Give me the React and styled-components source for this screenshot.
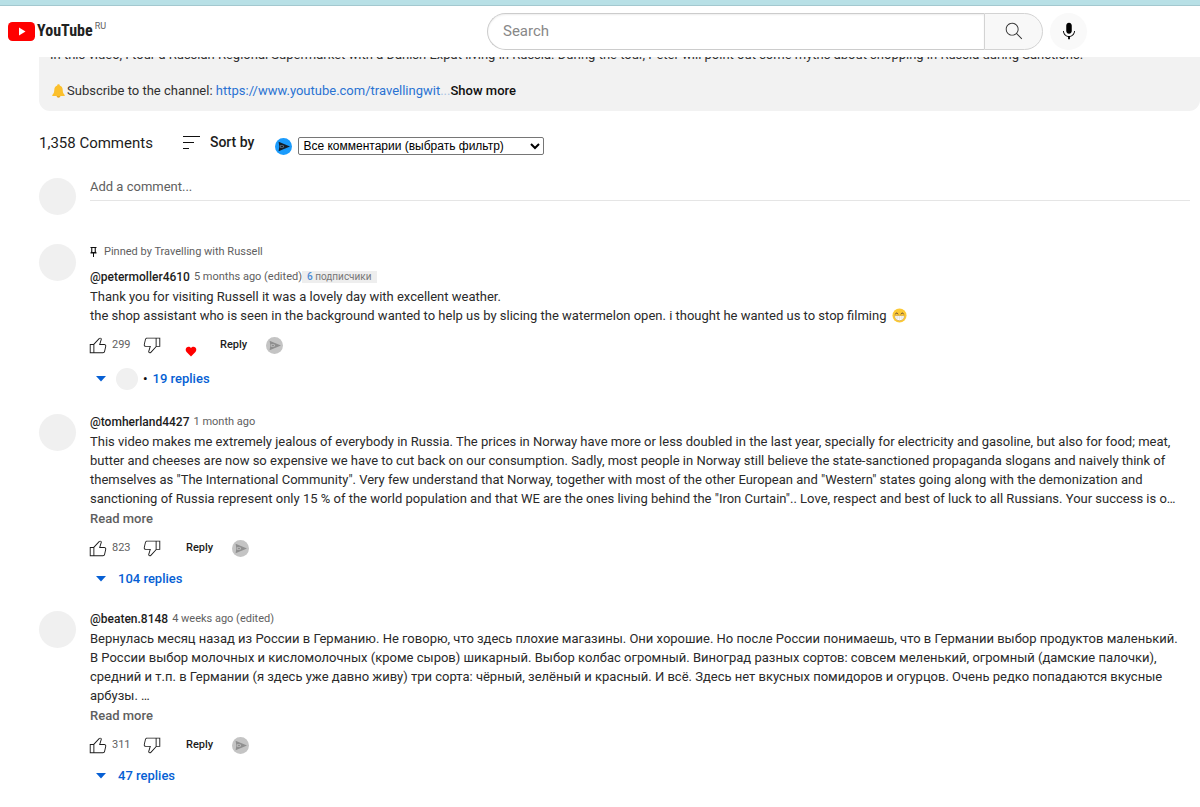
import React, { useState } from "react";
import styled, { createGlobalStyle } from "styled-components";

const comments = [
  {
    id: 1,
    pinnedBy: "Travelling with Russell",
    author: "@petermoller4610",
    time: "5 months ago (edited)",
    subscribers: 6,
    lines: [
      "Thank you for visiting Russell it was a lovely day with excellent weather.",
      "the shop assistant who is seen in the background wanted to help us by slicing the watermelon open. i thought he wanted us to stop filming ",
    ],
    emoji: true,
    likes: 299,
    hearted: true,
    replies: 19,
    creatorReplied: true,
  },
  {
    id: 2,
    author: "@tomherland4427",
    time: "1 month ago",
    lines: [
      'This video makes me extremely jealous of everybody in Russia. The prices in Norway have more or less doubled in the last year, specially for electricity and gasoline, but also for food; meat, butter and cheeses are now so expensive we have to cut back on our consumption. Sadly, most people in Norway still believe the state-sanctioned propaganda slogans and naively think of themselves as "The International Community". Very few understand that Norway, together with most of the other European and "Western" states going along with the demonization and sanctioning of Russia represent only 15 % of the world population and that WE are the ones living behind the "Iron Curtain".. Love, respect and best of luck to all Russians. Your success is o…',
    ],
    more: true,
    likes: 823,
    replies: 104,
  },
  {
    id: 3,
    author: "@beaten.8148",
    time: "4 weeks ago (edited)",
    lines: [
      "Вернулась месяц назад из России в Германию. Не говорю, что здесь плохие магазины. Они хорошие. Но после России понимаешь, что в Германии выбор продуктов маленький. В России выбор молочных и кисломолочных (кроме сыров) шикарный. Выбор колбас огромный. Виноград разных сортов: совсем меленький, огромный (дамские палочки), средний и т.п. в Германии (я здесь уже давно живу) три сорта: чёрный, зелёный и красный. И всё. Здесь нет вкусных помидоров и огурцов. Очень редко попадаются вкусные арбузы. …",
    ],
    more: true,
    likes: 311,
    replies: 47,
  },
];

const LikeIcon = () => (
  <svg width="22" height="22" viewBox="0 0 24 24" fill="currentColor" aria-hidden="true">
    <path d="M18.77,11h-4.23l1.52-4.94C16.38,5.03,15.54,4,14.38,4c-0.58,0-1.14,0.24-1.52,0.65L7,11H3v10h4h1h9.43 c1.06,0,1.98-0.67,2.19-1.61l1.34-6C21.23,12.15,20.18,11,18.77,11z M7,20H4v-8h3V20z M19.98,13.17l-1.34,6 C18.54,19.65,18.03,20,17.43,20H8v-8.61l5.6-6.06C13.79,5.12,14.08,5,14.38,5c0.26,0,0.5,0.11,0.63,0.3 c0.07,0.1,0.15,0.26,0.09,0.47l-1.52,4.94L13.18,12h1.35h4.23c0.41,0,0.8,0.17,1.03,0.46C19.92,12.61,20.05,12.86,19.98,13.17z" />
  </svg>
);

const DislikeIcon = () => (
  <svg width="22" height="22" viewBox="0 0 24 24" fill="currentColor" aria-hidden="true">
    <path d="M17,4h-1H6.57C5.5,4,4.59,4.67,4.38,5.61l-1.34,6C2.77,12.85,3.82,14,5.23,14h4.23l-1.52,4.94C7.62,19.97,8.46,21,9.62,21 c0.58,0,1.14-0.24,1.52-0.65L17,14h4V4H17z M10.4,19.67C10.21,19.88,9.92,20,9.62,20c-0.26,0-0.5-0.11-0.63-0.3 c-0.07-0.1-0.15-0.26-0.09-0.47l1.52-4.94l0.4-1.29H9.46H5.23c-0.41,0-0.8-0.17-1.03-0.46c-0.12-0.15-0.25-0.4-0.18-0.72l1.34-6 C5.46,5.35,5.97,5,6.57,5H16v8.61L10.4,19.67z M20,13h-3V5h3V13z" />
  </svg>
);

const HeartIcon = () => (
  <svg width="12" height="12" viewBox="0 0 12 12" aria-hidden="true">
    <path fill="#f00" d="M6 11.4 1.8 7.2C.3 5.6.4 3.5 1.6 2.4 2.9 1.2 4.9 1.4 6 3c1.1-1.6 3.1-1.8 4.4-.6 1.2 1.1 1.3 3.2-.2 4.8z" />
  </svg>
);

const PinIcon = () => (
  <svg width="7" height="10" viewBox="0 0 7 10" aria-hidden="true">
    <path
      fill="#0f0f0f"
      fillRule="evenodd"
      d="M.5 0h6v1h-.7v3.5L6.500 5.500v1H4V10H3V6.500H.500v-1l.7-1V1H.5zM2.300 1v4h2.400V1z"
    />
  </svg>
);

const BellIcon = () => (
  <svg width="13" height="14" viewBox="0 0 13 14" aria-hidden="true">
    <path fill="#fbc02d" d="M6.5.3c.8 0 1.3.5 1.3 1.2 1.9.6 2.8 2.2 2.9 4.3.1 2.4.4 3.7 2 5.2v1H.3v-1c1.600-1.500 1.900-2.800 2-5.200.1-2.100 1-3.700 2.900-4.300C5.200.8 5.700.3 6.500.3z" />
    <path fill="#e9a825" d="M4.6 12h3.8c-.1 1-.9 1.7-1.9 1.7S4.7 13 4.6 12z" />
  </svg>
);

const GrinIcon = () => (
  <svg width="15" height="15" viewBox="0 0 16 16" role="img" aria-label="grinning face">
    <circle cx="8" cy="8" r="7.5" fill="#fcc934" />
    <path d="M3.6 6.4c.5-1.5 2.3-1.5 2.8 0M9.6 6.4c.5-1.5 2.3-1.5 2.8 0" fill="none" stroke="#5d4037" strokeWidth="1" strokeLinecap="round" />
    <path d="M2.8 8.2h10.4c.2 3-2 5.3-5.2 5.3S2.6 11.2 2.8 8.2z" fill="#fff" stroke="#b98a2a" strokeWidth=".5" />
    <path d="M3.2 10.6h9.6M5.5 8.4v4.4M8 8.4v5M10.5 8.4v4.4" stroke="#c9c9c9" strokeWidth=".4" />
  </svg>
);

const BadgeIcon = ({ active }) => (
  <svg width="17" height="17" viewBox="0 0 17 17" aria-hidden="true">
    <circle cx="8.5" cy="8.5" r="8.5" fill={active ? "#1a9bfc" : "#c4c4c4"} />
    <path d="M3.6 3.8 15 8.5 3.6 13.2l.8-4.7z" fill={active ? "#15202b" : "#8f8f8f"} />
    <path d="M5 7.2h3.4l.8 1.3-.8 1.300H5z" fill={active ? "#5d7183" : "#bcbcbc"} />
    <path d="M5.8 8.5h2.200" stroke={active ? "#15202b" : "#8f8f8f"} strokeWidth="1" />
  </svg>
);

const Comment = ({ comment }) => {
  const [open, setOpen] = useState(false);

  return (
    <CommentRow>
      <Avatar />
      <CommentMain>
        {comment.pinnedBy && (
          <Pinned>
            <PinIcon />
            Pinned by {comment.pinnedBy}
          </Pinned>
        )}
        <Meta>
          <Author href="#">{comment.author}</Author>
          <Time href="#">{comment.time}</Time>
          {comment.subscribers && (
            <Subscribers>
              <b>{comment.subscribers}</b> подписчики
            </Subscribers>
          )}
        </Meta>
        <CommentText>
          {comment.lines.map((line, index) => (
            <p key={index}>
              {line}
              {comment.emoji && index === comment.lines.length - 1 && <GrinIcon />}
            </p>
          ))}
        </CommentText>
        {comment.more && <ReadMore>Read more</ReadMore>}
        <Actions>
          <IconButton aria-label="Like">
            <LikeIcon />
          </IconButton>
          <Likes>{comment.likes}</Likes>
          <IconButton aria-label="Dislike">
            <DislikeIcon />
          </IconButton>
          {comment.hearted && (
            <Heart>
              <HeartIcon />
            </Heart>
          )}
          <ReplyButton>Reply</ReplyButton>
          <IconButton aria-label="Comment history">
            <BadgeIcon />
          </IconButton>
        </Actions>
        <Replies onClick={() => setOpen(!open)} aria-expanded={open}>
          <svg width="10" height="6" viewBox="0 0 10 6" aria-hidden="true">
            <path d="M0 0h10L5 5.5z" fill="#065fd4" />
          </svg>
          {comment.creatorReplied && (
            <Creator>
              <Avatar $small />
              <span>•</span>
            </Creator>
          )}
          {comment.replies} replies
        </Replies>
      </CommentMain>
    </CommentRow>
  );
};

const App = () => {
  return (
    <>
      <GlobalStyle />
      <Header>
        <Logo href="#" aria-label="YouTube home">
          <svg width="27" height="19" viewBox="0 0 27 19" aria-hidden="true">
            <rect width="27" height="19" rx="4.5" fill="#f00" />
            <path d="M11 5.5v8l6.5-4z" fill="#fff" />
          </svg>
          <Wordmark>YouTube</Wordmark>
          <Country>RU</Country>
        </Logo>
        <SearchForm onSubmit={(e) => e.preventDefault()}>
          <SearchInput type="text" placeholder="Search" aria-label="Search" />
          <SearchButton aria-label="Search">
            <svg width="22" height="22" viewBox="0 0 24 24" fill="#303030" aria-hidden="true">
              <path d="M20.87 20.17l-5.59-5.59C16.35 13.35 17 11.75 17 10c0-3.87-3.13-7-7-7s-7 3.13-7 7 3.13 7 7 7c1.75 0 3.35-.65 4.58-1.71l5.59 5.59.7-.71zM10 16c-3.31 0-6-2.69-6-6s2.69-6 6-6 6 2.69 6 6-2.69 6-6 6z" />
            </svg>
          </SearchButton>
          <MicButton type="button" aria-label="Search with your voice">
            <svg width="22" height="22" viewBox="0 0 24 24" aria-hidden="true">
              <path d="M12 3C10.34 3 9 4.37 9 6.07v5.86C9 13.63 10.34 15 12 15s3-1.37 3-3.07V6.07C15 4.37 13.66 3 12 3zM18.5 12h-1c0 3.03-2.47 5.5-5.5 5.5S6.5 15.03 6.5 12h-1c0 3.24 2.39 5.93 5.5 6.41V21h2v-2.59c3.11-.48 5.5-3.17 5.5-6.41z" />
            </svg>
          </MicButton>
        </SearchForm>
      </Header>

      <Description>
        <DescriptionText>
          <p>
            In this video, I tour a Russian Regional Supermarket with a Danish Expat living in Russia. During the tour, Peter will point out some myths about shopping in Russia during Sanctions.
          </p>
          <p>&nbsp;</p>
          <DescriptionLine>
            <BellIcon />
            <span>Subscribe to the channel:&nbsp;</span>
            <a href="#">https://www.youtube.com/travellingwit</a>
            <Dots>...</Dots>
            <ShowMore>Show more</ShowMore>
          </DescriptionLine>
        </DescriptionText>
      </Description>

      <Comments>
        <CommentsHeader>
          <Count>1,358 Comments</Count>
          <SortButton>
            <svg width="17" height="13" viewBox="0 0 17 13" aria-hidden="true">
              <path d="M0 .5h17M0 6.5h11M0 12.5h6" stroke="#0f0f0f" />
            </svg>
            Sort by
          </SortButton>
          <Filter>
            <BadgeIcon active />
            <select aria-label="Фильтр комментариев">
              <option>Все комментарии (выбрать фильтр)</option>
            </select>
          </Filter>
        </CommentsHeader>
        <AddComment>
          <Avatar />
          <CommentInput type="text" placeholder="Add a comment..." aria-label="Add a comment" />
        </AddComment>
        {comments.map((comment) => (
          <Comment key={comment.id} comment={comment} />
        ))}
      </Comments>
    </>
  );
};

const GlobalStyle = createGlobalStyle`
  * {
    box-sizing: border-box;
  }

  body {
    margin: 0;
    background: #fff;
    color: #1c1c1c;
    font-family: Roboto, "Liberation Sans", Arial, sans-serif;
    font-size: 13px;
    line-height: 18px;
  }

  p, h2 {
    margin: 0;
  }

  button {
    border: none;
    padding: 0;
    background: none;
    color: inherit;
    font: inherit;
    cursor: pointer;
  }

  a {
    color: inherit;
    text-decoration: none;
  }

  svg {
    flex-shrink: 0;
  }
`;

const Header = styled.header`
  display: flex;
  align-items: center;
  height: 57px;
  padding: 0 8px;
  border-top: 5px solid #b8e0e6;
  box-shadow: inset 0 1px 0 #a3c8cf;
`;

const Logo = styled.a`
  display: flex;
  align-items: center;
  flex: 0 1 479px;
  gap: 2px;
`;

const Wordmark = styled.span`
  font-family: "Roboto Condensed", "Liberation Sans Narrow", "Liberation Sans", sans-serif;
  font-size: 16px;
  font-weight: 700;
  color: #212121;
`;

const Country = styled.span`
  align-self: flex-start;
  font-size: 9px;
  line-height: 9px;
  color: #606060;
`;

const SearchForm = styled.form`
  display: flex;
  flex: 0 1 600px;
  height: 37px;
`;

const SearchInput = styled.input`
  flex: 1;
  min-width: 0;
  padding: 0 15px;
  border: 1px solid #ccc;
  border-right: none;
  border-radius: 19px 0 0 19px;
  box-shadow: inset 0 1px 2px #eee;
  font: inherit;
  font-size: 15px;
  outline: none;

  &::placeholder {
    color: #888;
  }
`;

const SearchButton = styled.button`
  display: flex;
  align-items: center;
  justify-content: center;
  width: 59px;
  && {
    border: 1px solid #d3d3d3;
    border-radius: 0 19px 19px 0;
    background: #f8f8f8;
  }
`;

const MicButton = styled.button`
  display: flex;
  align-items: center;
  justify-content: center;
  width: 37px;
  margin-left: 7px;
  && {
    border-radius: 50%;
    background: #f9f9f9;
  }
`;

const Description = styled.section`
  margin-left: 39px;
  padding: 0 11px 11px;
  overflow: hidden;
  border-radius: 0 0 11px 11px;
  background: #f2f2f2;
  color: #303030;
`;

const DescriptionText = styled.div`
  margin-top: -11px;
`;

const DescriptionLine = styled.div`
  display: flex;
  align-items: center;

  svg {
    margin: 0 2px;
  }

  a {
    color: #2a73d2;
  }
`;

const Dots = styled.span`
  color: #a9c3e4;
`;

const ShowMore = styled.button`
  && {
    color: #0f0f0f;
    font-weight: 500;
  }
`;

const Comments = styled.main`
  padding: 22px 10px 18px 39px;
`;

const CommentsHeader = styled.div`
  display: flex;
  align-items: flex-start;
  height: 45px;
`;

const Count = styled.h2`
  font-size: 15px;
  font-weight: 400;
  line-height: 20px;
`;

const SortButton = styled.button`
  display: flex;
  align-items: center;
  gap: 10px;
  && {
    margin-left: 30px;
    font-size: 14px;
    font-weight: 500;
  }
`;

const Filter = styled.div`
  display: flex;
  align-items: center;
  gap: 6px;
  margin: 4px 0 0 21px;

  select {
    width: 246px;
    height: 18px;
    border: 1px solid #767676;
    border-radius: 2px;
    background: #fff;
    color: #000;
    font-family: "Liberation Sans", Arial, sans-serif;
    font-size: 12px;
  }
`;

const Avatar = styled.div`
  flex-shrink: 0;
  width: ${({ $small }) => ($small ? 22 : 37)}px;
  height: ${({ $small }) => ($small ? 22 : 37)}px;
  border-radius: 50%;
  background: #f0f0f0;
`;

const AddComment = styled.div`
  display: flex;
  align-items: flex-start;
  gap: 14px;
  margin-bottom: 29px;
`;

const CommentInput = styled.input`
  flex: 1;
  height: 23px;
  padding: 0 0 6px;
  border: none;
  border-bottom: 1px solid #e5e5e5;
  font: inherit;
  outline: none;

  &::placeholder {
    color: #606060;
  }
`;

const CommentRow = styled.article`
  display: flex;
  gap: 14px;
  margin-bottom: 18px;
`;

const CommentMain = styled.div`
  flex: 1;
  min-width: 0;
`;

const Pinned = styled.div`
  display: flex;
  align-items: center;
  gap: 7px;
  margin-bottom: 9px;
  font-size: 11px;
  line-height: 16px;
  color: #606060;
`;

const Meta = styled.div`
  display: flex;
  align-items: center;
  height: 16px;
  margin-bottom: 2px;
  font-size: 11px;
  line-height: 16px;
`;

const Author = styled.a`
  margin-right: 4px;
  font-size: 12px;
  font-weight: 500;
`;

const Time = styled.a`
  color: #606060;
`;

const Subscribers = styled.span`
  padding: 0 5px;
  background: #eee;
  color: #777;
  font-size: 10px;
  line-height: 12px;

  b {
    color: #4a8ad4;
    font-weight: 500;
  }
`;

const CommentText = styled.div`
  padding-right: 11px;
  line-height: 19px;
  color: #2a2a2a;

  svg {
    margin-left: 2px;
    vertical-align: -3px;
  }
`;

const ReadMore = styled.button`
  display: block;
  && {
    margin-top: 2px;
    color: #606060;
    font-weight: 500;
  }
`;

const Actions = styled.div`
  display: flex;
  align-items: center;
  height: 32px;
  margin: 4px 0 0 -3px;
`;

const IconButton = styled.button`
  display: flex;
`;

const Likes = styled.span`
  width: 27px;
  margin: 0 2px 0 3px;
  font-size: 11px;
  color: #606060;
`;

const Heart = styled.span`
  display: flex;
  margin: 12px 0 0 22px;
`;

const ReplyButton = styled.button`
  && {
    margin: 0 19px 0 23px;
    font-size: 11px;
    font-weight: 500;
  }
`;

const Replies = styled.button`
  display: flex;
  align-items: center;
  && {
    min-height: 29px;
    padding-left: 6px;
    color: #065fd4;
    font-weight: 500;
  }

  > svg {
    margin-right: 12px;
  }
`;

const Creator = styled.span`
  display: flex;
  align-items: center;
  gap: 5px;
  height: 35px;
  margin: 0 5px 0 -2px;
  color: #0f0f0f;
`;

export default App;
